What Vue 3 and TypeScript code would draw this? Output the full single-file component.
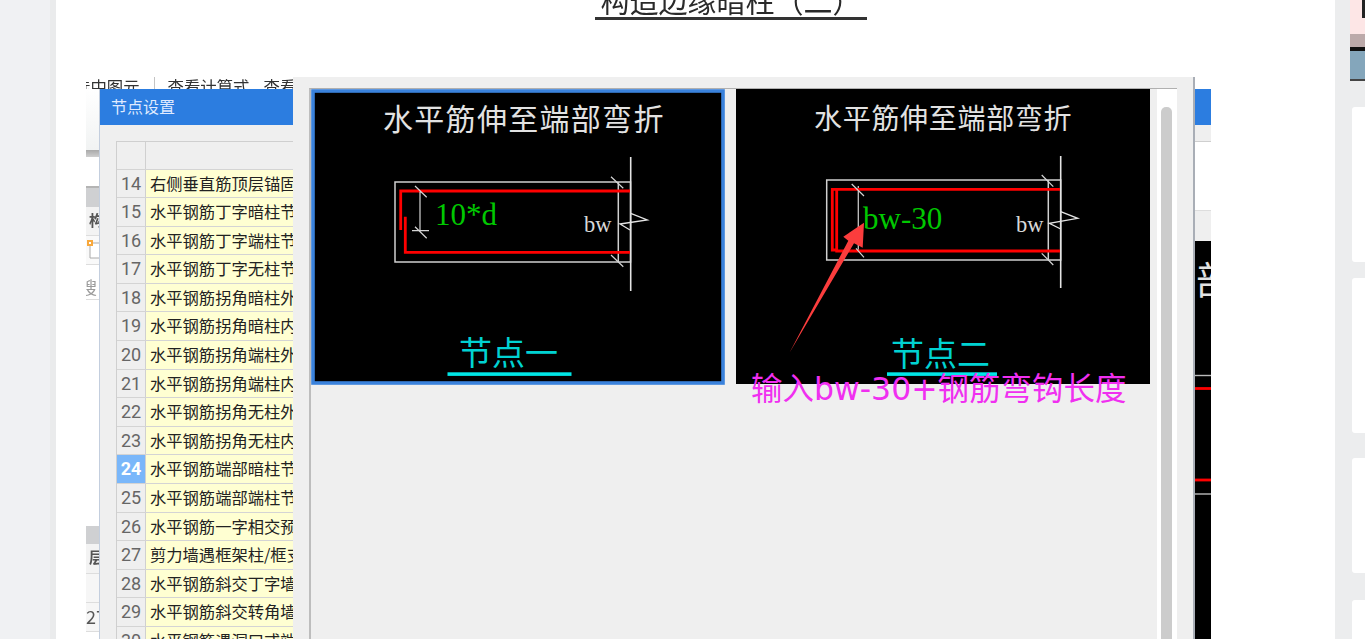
<script setup lang="ts">
interface Row { no: number; text: string }
const names: string[] = [
  '右侧垂直筋顶层锚固', '水平钢筋丁字暗柱节点', '水平钢筋丁字端柱节点', '水平钢筋丁字无柱节点',
  '水平钢筋拐角暗柱外侧', '水平钢筋拐角暗柱内侧', '水平钢筋拐角端柱外侧', '水平钢筋拐角端柱内侧',
  '水平钢筋拐角无柱外侧', '水平钢筋拐角无柱内侧', '水平钢筋端部暗柱节点', '水平钢筋端部端柱节点',
  '水平钢筋一字相交预留', '剪力墙遇框架柱/框支柱', '水平钢筋斜交丁字墙', '水平钢筋斜交转角墙', '水平钢筋遇洞口或端部'
]
const rows: Row[] = names.map((text, i) => ({ no: i + 14, text }))
const selected = 24
</script>

<template>
  <div class="shell">
    <aside class="gutter"></aside>

    <main class="page">
      <h1 class="doc-title">构造边缘暗柱（二）</h1>

      <section class="figure">
        <div class="toolbar">
          <span class="tool tool-cut">选中图元</span>
          <i class="tool-sep"></i>
          <span class="tool">查看计算式</span>
          <span class="tool">查看工程量</span>
        </div>

        <div class="work">
          <div class="strip">
            <div class="s-ribbon"></div>
            <div class="s-rule"></div>
            <div class="s-blank"></div>
            <div class="s-head"></div>
            <div class="s-row s-label"><b>构</b></div>
            <div class="s-row s-iconrow">
              <svg class="s-icon" viewBox="0 0 13 20" width="13" height="20">
                <path d="M13 4H4V19H13" fill="#fff" stroke="#aaa" />
                <rect x="1" y="1" width="6" height="6" fill="#f8a83c" />
                <rect x="3" y="3" width="2" height="2" fill="#fff" />
              </svg>
            </div>
            <div class="s-row s-search"><span class="s-search-text">搜</span></div>
            <div class="s-fill"></div>
            <div class="s-head s-head2"></div>
            <div class="s-row s-label s-tall"><b>层</b></div>
            <div class="s-row s-plain"></div>
            <div class="s-row s-num">27</div>
          </div>

          <div class="dialog">
            <header class="dlg-head">节点设置</header>
            <div class="dlg-body">
              <div class="table">
                <div class="tr tr-head">
                  <div class="td-no"></div>
                  <div class="td-name"></div>
                </div>
                <div v-for="r in rows" :key="r.no" class="tr">
                  <div class="td-no" :class="{ on: r.no === selected }">{{ r.no }}</div>
                  <div class="td-name">{{ r.text }}</div>
                </div>
              </div>

              <div class="under">
                <div class="u-gap"></div>
                <div class="u-white"></div>
                <div class="u-band"></div>
                <svg class="u-cad" viewBox="1193 241 18 398" width="18" height="398">
                  <rect x="1193" y="241" width="18" height="398" fill="#000" />
                  <text class="cad-big" x="1196" y="294">部</text>
                  <line x1="1193" x2="1211" y1="375.5" y2="375.5" stroke="#bbb" stroke-width="1.4" />
                  <line x1="1193" x2="1211" y1="388.5" y2="388.5" stroke="#f00" stroke-width="2.8" />
                  <line x1="1193" x2="1211" y1="480" y2="480" stroke="#f00" stroke-width="2.8" />
                  <line x1="1193" x2="1211" y1="494" y2="494" stroke="#bbb" stroke-width="1.4" />
                </svg>
              </div>
            </div>
          </div>
        </div>

        <!-- foreground window with the two node pictures -->
        <div class="panel">
          <div class="frame">
            <div class="gallery">
              <svg class="node node-a" viewBox="311 89 414 296" width="414" height="296">
                <rect x="313" y="91" width="410" height="292" fill="#000" stroke="#3a82dc" stroke-width="3.6" />
                <text class="cad-title" x="383" y="129.5" letter-spacing="1.3">水平筋伸至端部弯折</text>
                <rect x="395" y="182" width="235.5" height="80" fill="none" stroke="#d0d0d0" stroke-width="1.5" />
                <line x1="630.7" y1="157" x2="630.7" y2="291" stroke="#e4e4e4" stroke-width="1.6" />
                <line x1="618.3" y1="182" x2="618.3" y2="262" stroke="#d0d0d0" stroke-width="1.5" />
                <path d="M630 191H400.7V230M405.3 216.7V252.3H630" fill="none" stroke="#f00" stroke-width="2.8" />
                <path d="M420 191.7V230.5M412 230.7H429M415 186L426.7 197.3M415 226.7L426.7 238.3M611 176.7L623.3 188.3M611 255L623.3 266.7" fill="none" stroke="#d4d4d4" stroke-width="1.2" />
                <path d="M630.7 213.3L647.3 220L620 224L630 230" fill="none" stroke="#e4e4e4" stroke-width="1.3" />
                <text class="cad-dim" x="435" y="225">10*d</text>
                <text class="cad-bw" x="584" y="231.5">bw</text>
                <text class="cad-node" x="459" y="365">节点一</text>
                <rect x="447.5" y="372.3" width="124" height="3.6" fill="#00e6e6" />
              </svg>

              <svg class="node node-b" viewBox="736 89 414 296" width="414" height="296">
                <rect x="736" y="88" width="414" height="296" fill="#000" />
                <text class="cad-title cad-title2" x="814" y="128.5" letter-spacing="0.7">水平筋伸至端部弯折</text>
                <rect x="826.7" y="180" width="234" height="80" fill="none" stroke="#d0d0d0" stroke-width="1.5" />
                <line x1="1060.7" y1="156" x2="1060.7" y2="288" stroke="#e4e4e4" stroke-width="1.6" />
                <line x1="1048.3" y1="180" x2="1048.3" y2="260" stroke="#d0d0d0" stroke-width="1.5" />
                <line x1="858.3" y1="186" x2="858.3" y2="252" stroke="#c4c4c4" stroke-width="1.3" />
                <path d="M1060 189.3H832.3V250H838M836.7 189.3V251H1060" fill="none" stroke="#f00" stroke-width="2.8" />
                <path d="M851.7 184L864 196M856 248.3L864 257.3M1041.7 175L1053.3 186.7M1041.7 253.3L1053.3 265" fill="none" stroke="#d4d4d4" stroke-width="1.2" />
                <path d="M1060.7 211.7L1077.7 218.3L1049.3 223.3L1060.7 229" fill="none" stroke="#e4e4e4" stroke-width="1.3" />
                <text class="cad-dim" x="863" y="229">bw-30</text>
                <text class="cad-bw" x="1016" y="231.5">bw</text>
                <text class="cad-node" x="891" y="366">节点二</text>
                <rect x="887" y="372.3" width="110" height="3.6" fill="#00e6e6" />
              </svg>
            </div>
            <div class="scroll"><div class="thumb"></div></div>
          </div>
        </div>

        <!-- annotation drawn on top of the collage -->
        <svg class="markup" viewBox="86 77 1125 562" width="1125" height="562">
          <polygon points="789.5,352.7 848.3,240.7 843.3,236.7 864,222.7 862.7,247.7 854,243.3" fill="#fb3d3d" />
          <text class="note" x="751" y="399.5">输入bw-30+钢筋弯钩长度</text>
        </svg>
      </section>
    </main>

    <aside class="rail">
      <div class="banner">
        <div class="b-pink"><i class="b-mark"></i></div>
        <div class="b-taupe"></div>
        <div class="b-black"></div>
        <div class="b-blue"></div>
      </div>
      <div class="card card-1"></div>
      <div class="card card-2"></div>
      <div class="card card-3"></div>
      <div class="card card-4"></div>
    </aside>
  </div>
</template>

<style>
html, body { margin: 0; height: 100%; overflow: hidden; background: #fff; }
</style>

<style scoped>
.shell {
  display: flex;
  height: 100vh;
  overflow: hidden;
  font-family: "Noto Sans CJK SC", "Noto Sans", sans-serif;
}
.gutter {
  flex: 0 0 50px;
  background: #f0f1f3;
  border-right: 6px solid #eaebec;
}
.page {
  flex: 1 1 auto;
  min-width: 0;
  background: #fff;
  overflow: hidden;
}
.doc-title {
  box-sizing: content-box;
  width: 272px;
  height: 34px;
  margin: -17px 0 0 539px;
  border-bottom: 3px solid #333;
  font-size: 29px;
  font-weight: 400;
  line-height: 34px;
  text-align: center;
  white-space: nowrap;
  color: #2a2a2a;
  filter: blur(0.5px);
}
.figure {
  position: relative;
  width: 1125px;
  height: 562px;
  margin: 57px 0 0 30px;
  overflow: hidden;
  filter: blur(0.4px);
}
.toolbar {
  display: flex;
  align-items: flex-start;
  height: 12px;
  overflow: hidden;
  font-size: 16.4px;
  line-height: 18px;
  color: #333;
}
.tool { flex: none; white-space: nowrap; }
.tool + .tool { margin-left: 14px; }
.tool-cut { margin-left: -12px; }
.tool-sep { flex: none; width: 1px; height: 12px; margin: 0 13px 0 14px; background: #c4c4c4; }

.work { display: flex; height: 550px; }
.strip {
  flex: 0 0 13px;
  display: flex;
  flex-direction: column;
  overflow: hidden;
  font-size: 15px;
  line-height: 26px;
  color: #666;
  background: #fff;
}
.s-ribbon { flex: 0 0 61px; background: linear-gradient(#fff, #f1f3f3); }
.s-rule { flex: 0 0 7px; background: linear-gradient(#a9a9a9, #cfcfcf); }
.s-blank { flex: 0 0 29px; }
.s-head { flex: 0 0 21px; background: #cfd0d2; border-top: 2px solid #b4b4b4; box-sizing: border-box; }
.s-row { flex: 0 0 29px; box-sizing: border-box; border-bottom: 1px solid #ddd; white-space: nowrap; overflow: hidden; }
.s-label { background: #f3f3f3; padding-left: 3px; color: #555; }
.s-tall { flex-basis: 30px; }
.s-iconrow { background: #f9f9f9; }
.s-icon { display: block; margin-top: 3px; }
.s-search { flex-basis: 35px; padding-top: 12px; line-height: 20px; color: #9a9a9a; font-size: 17px; }
.s-search-text { display: block; margin-left: -6px; }
.s-fill { flex: 0 0 220px; }
.s-head2 { flex-basis: 24px; border-top: 0; background: linear-gradient(#fff 0 6px, #cfd0d2 6px); }
.s-plain { background: #f6f6f6; }
.s-num { background: #f6f6f6; font-size: 18px; color: #555; }

.dialog {
  flex: 0 0 1111px;
  display: flex;
  flex-direction: column;
  border-left: 1px solid #c3cede;
}
.dlg-head {
  flex: 0 0 36px;
  padding-left: 11px;
  background: #2c7de0;
  color: #dfeaff;
  font-size: 16px;
  line-height: 35px;
}
.dlg-body {
  flex: 1 1 auto;
  display: flex;
  justify-content: space-between;
  background: #efefef;
  min-height: 0;
}
.table {
  width: 300px;
  margin: 16px 0 0 16px;
  border-top: 1px solid #cfcfcf;
  border-left: 1px solid #cfcfcf;
}
.tr { display: flex; height: 28.6px; box-sizing: border-box; border-bottom: 1.5px solid #d4d4d4; }
.tr-head { height: 27.5px; }
.td-no {
  flex: 0 0 29px;
  box-sizing: border-box;
  border-right: 1.5px solid #d0d0d0;
  background: #efefef;
  color: #666;
  font-family: Roboto, "Noto Sans", sans-serif;
  font-size: 18px;
  line-height: 27px;
  text-align: center;
}
.td-no.on { background: #7ab7fa; color: #fff; font-weight: 700; }
.td-name {
  flex: 1 1 auto;
  padding-left: 4px;
  background: #ffffd2;
  color: #222;
  font-size: 16.3px;
  line-height: 27px;
  white-space: nowrap;
  overflow: hidden;
}
.tr-head .td-name { background: #efefef; }
.under { flex: 0 0 18px; display: flex; flex-direction: column; }
.u-gap { flex: 0 0 16px; background: #efefef; border-bottom: 1px solid #cfcfcf; }
.u-white { flex: 0 0 68px; background: #fff; }
.u-band { flex: 0 0 31px; background: #efefef; border-top: 1px solid #ddd; box-sizing: border-box; }
.u-cad { display: block; flex: none; }

.panel {
  position: absolute;
  top: 0;
  left: 207px;
  box-sizing: border-box;
  width: 902px;
  height: 562px;
  padding: 10.5px 16px 0;
  background: #efefef;
  border-right: 2px solid #a9aeb6;
  z-index: 1;
}
.frame {
  display: flex;
  height: 100%;
  box-sizing: border-box;
  border-top: 1.5px solid #b0b0b0;
  border-left: 2px solid #bdbdbd;
  background: #efefef;
}
.gallery { flex: 1 1 auto; display: flex; align-items: flex-start; gap: 11px; }
.node { display: block; flex: none; }
.scroll { flex: 0 0 20px; box-sizing: border-box; padding: 18px 5px 0 4px; background: #fff; }
.thumb { height: 100%; background: #ccc; border-radius: 5px 5px 0 0; }

.cad-title { fill: #e2e2e2; font-size: 30px; font-family: "Noto Sans CJK SC", sans-serif; }
.cad-title2 { font-size: 28px; }
.cad-big { fill: #e2e2e2; font-size: 38px; font-family: "Noto Sans CJK SC", sans-serif; }
.cad-dim { fill: #00c800; font-size: 31px; font-family: "Liberation Serif", serif; }
.cad-bw { fill: #d8d8d8; font-size: 22.5px; font-family: "Liberation Serif", serif; }
.cad-node { fill: #00d2d2; font-size: 33px; font-family: "Noto Sans CJK SC", sans-serif; }

.markup {
  position: absolute;
  top: 0;
  left: 0;
  z-index: 2;
  pointer-events: none;
}
.note {
  fill: #f02ff0;
  font-size: 31.5px;
  font-family: "DejaVu Sans", "Noto Sans CJK SC", sans-serif;
}

.rail {
  flex: 0 0 30px;
  display: flex;
  flex-direction: column;
  background: #ecedee;
  overflow: hidden;
}
.banner { flex: 0 0 81px; margin-left: 15px; display: flex; flex-direction: column; border-bottom: 2px solid #444; box-sizing: border-box; }
.b-pink { flex: 0 0 34px; display: flex; justify-content: flex-end; align-items: flex-start; background: #fde6e6; }
.b-mark { width: 3px; height: 18px; background: #222; }
.b-taupe { flex: 0 0 13px; background: #bcaaaa; }
.b-black { flex: 0 0 4px; background: #111; }
.b-blue { flex: 1 1 auto; background: #84a6bb; }
.card { flex: none; margin-left: 17px; background: #fff; border-radius: 3px 0 0 3px; }
.card-1 { height: 155px; margin-top: 26px; }
.card-2 { height: 155px; margin-top: 16px; }
.card-3 { height: 115px; margin-top: 25px; }
.card-4 { height: 60px; margin-top: 27px; }
</style>
